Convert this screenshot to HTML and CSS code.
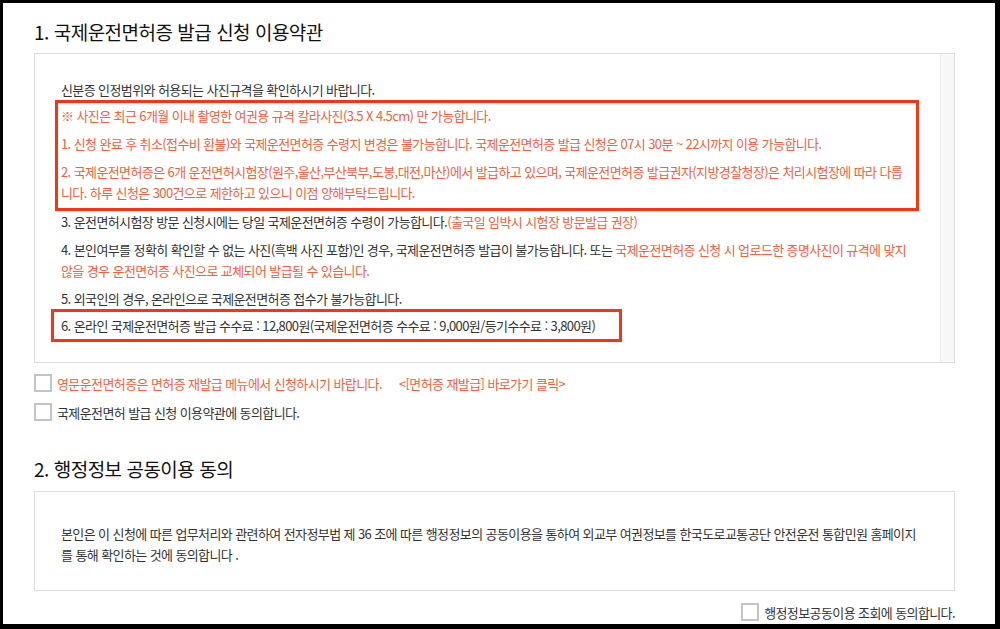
FILE: index.html
```html
<!DOCTYPE html>
<html lang="ko">
<head>
<meta charset="utf-8">
<title>국제운전면허증 발급 신청</title>
<link rel="stylesheet" href="styles.css">
</head>
<body>
<div class="window">
  <section class="section">
    <h2 class="title">1. 국제운전면허증 발급 신청 이용약관</h2>
    <div class="terms">
      <div class="terms-body">
        <p class="tight">신분증 인정범위와 허용되는 사진규격을 확인하시기 바랍니다.</p>
        <div class="redbox redbox-wide">
          <p class="red">※ 사진은 최근 6개월 이내 촬영한 여권용 규격 칼라사진(3.5 X 4.5cm) 만 가능합니다.</p>
          <p class="red">1. 신청 완료 후 취소(접수비 환불)와 국제운전면허증 수령지 변경은 불가능합니다. 국제운전면허증 발급 신청은 07시 30분 ~ 22시까지 이용 가능합니다.</p>
          <p class="red">2. 국제운전면허증은 6개 운전면허시험장(원주,울산,부산북부,도봉,대전,마산)에서 발급하고 있으며, 국제운전면허증 발급권자(지방경찰청장)은 처리시험장에 따라 다릅<br>니다. 하루 신청은 300건으로 제한하고 있으니 이점 양해부탁드립니다.</p>
        </div>
        <p>3. 운전면허시험장 방문 신청시에는 당일 국제운전면허증 수령이 가능합니다.<span class="red">(출국일 임박시 시험장 방문발급 권장)</span></p>
        <p>4. 본인여부를 정확히 확인할 수 없는 사진(흑백 사진 포함)인 경우, 국제운전면허증 발급이 불가능합니다. 또는 <span class="red">국제운전면허증 신청 시 업로드한 증명사진이 규격에 맞지 않을 경우 운전면허증 사진으로 교체되어 발급될 수 있습니다.</span></p>
        <p class="tight">5. 외국인의 경우, 온라인으로 국제운전면허증 접수가 불가능합니다.</p>
        <div class="redbox redbox-fit">
          <p>6. 온라인 국제운전면허증 발급 수수료 : 12,800원(국제운전면허증 수수료 : 9,000원/등기수수료 : 3,800원)</p>
        </div>
      </div>
      <div class="scrolltrack"></div>
    </div>
    <label class="check">
      <span class="box"></span>
      <span class="red">영문운전면허증은 면허증 재발급 메뉴에서 신청하시기 바랍니다.</span>
      <span class="red link">&lt;[면허증 재발급] 바로가기 클릭&gt;</span>
    </label>
    <label class="check">
      <span class="box"></span>
      <span>국제운전면허 발급 신청 이용약관에 동의합니다.</span>
    </label>
  </section>

  <section class="section second">
    <h2 class="title">2. 행정정보 공동이용 동의</h2>
    <div class="notice">
      <p>본인은 이 신청에 따른 업무처리와 관련하여 전자정부법 제 36 조에 따른 행정정보의 공동이용을 통하여 외교부 여권정보를 한국도로교통공단 안전운전 통합민원 홈페이지를 통해 확인하는 것에 동의합니다 .</p>
    </div>
    <label class="check check-right">
      <span class="box"></span>
      <span>행정정보공동이용 조회에 동의합니다.</span>
    </label>
  </section>
</div>
</body>
</html>
```

FILE: styles.css
```css
* { box-sizing: border-box; }
html, body { margin: 0; padding: 0; }
body {
  background: #000;
  font-family: "Noto Sans CJK KR", "Noto Sans", sans-serif;
  color: #333;
  width: 1000px;
  height: 629px;
  overflow: hidden;
}
.window {
  margin: 3px 5px 5px 3px;
  height: 621px;
  background: #fff;
  padding: 0 40px 0 31px;
  overflow: hidden;
}
.section { display: flex; flex-direction: column; }
.title {
  margin: 0;
  padding-top: 16px;
  height: 50px;
  font-size: 19px;
  font-weight: normal;
  color: #111;
  line-height: 26px;
  letter-spacing: -0.5px;
}
.terms {
  display: flex;
  border: 1px solid #ddd;
  height: 310px;
  width: 921px;
}
.terms-body {
  flex: 1;
  padding: 25px 20px 0 26px;
}
.terms-body p, .notice p {
  margin: 0 0 7px;
  font-size: 13px;
  line-height: 21px;
  letter-spacing: -0.6px;
}
.terms-body p.tight { margin-bottom: 0; }
.scrolltrack {
  width: 14px;
  background: #f7f7f7;
  border-left: 1px solid #ececec;
}
.red { color: #f2603c; }
.redbox {
  border: 3px solid #fa3411;
}
.redbox-wide {
  margin: 0 1px 0 -6px;
  padding: 2px 1px 0 3px;
}
.redbox-wide p:last-child { margin-bottom: 5px; }
.redbox-fit {
  align-self: flex-start;
  display: inline-block;
  margin-left: -10px;
  padding: 3px 24px 3px 7px;
}
.redbox-fit p { margin: 0; }
.check {
  display: flex;
  align-items: center;
  gap: 5px;
  font-size: 13px;
  letter-spacing: -0.6px;
  height: 18px;
  margin-top: 11px;
}
.check + .check { margin-top: 11px; }
.box {
  width: 18px;
  height: 18px;
  border: 2px solid #c4c4c4;
  background: #fff;
  flex: none;
}
.link { margin-left: 12px; }
.second .title { padding-top: 35px; height: 70px; }
.notice {
  border: 1px solid #ddd;
  height: 100px;
  width: 921px;
  padding: 31px 35px 0 26px;
}
.notice p { margin: 0; }
.check-right {
  align-self: flex-end;
  margin-top: 12px;
  margin-right: 0;
}
```
